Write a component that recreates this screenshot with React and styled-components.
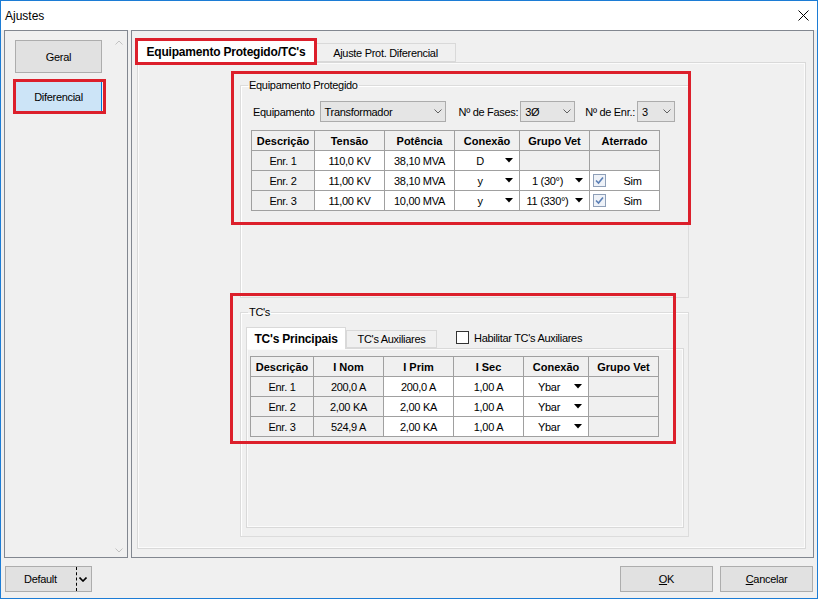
import React from 'react';
import styled, { createGlobalStyle } from 'styled-components';

const GlobalStyle = createGlobalStyle`
  html, body { margin: 0; padding: 0; background: #fff; }
  body {
    font-family: "Liberation Sans", Arial, sans-serif;
    font-size: 11px;
    color: #000;
  }
  * { box-sizing: border-box; }
`;

const RED = '#dc1f2b';

const Window = styled.div`
  width: 818px;
  height: 599px;
  border: 1px solid #1c7cd5;
  background: #f0f0f0;
  display: flex;
  flex-direction: column;
  overflow: hidden;
`;

const TitleBar = styled.div`
  height: 29px;
  flex: none;
  background: #fff;
  display: flex;
  align-items: center;
  justify-content: space-between;
  padding: 0 8px 0 4px;
  font-size: 12px;
`;

const Body = styled.div`
  height: 528px;
  flex: none;
  display: flex;
  gap: 3px;
  padding: 0 3px;
`;

const SidePanel = styled.div`
  width: 124px;
  border: 1px solid #828790;
  display: flex;
`;

const SideList = styled.div`
  flex: 1;
  display: flex;
  flex-direction: column;
  gap: 7px;
  padding: 9px 0 0 10px;
`;

const ScrollBar = styled.div`
  width: 17px;
  display: flex;
  flex-direction: column;
  justify-content: space-between;
  align-items: center;
  padding: 9px 0 4px;
`;

const Marked = styled.div`
  position: relative;
  align-self: flex-start;
`;

const Callout = styled.div`
  position: absolute;
  left: ${p => p.$l}px;
  top: ${p => p.$t}px;
  width: ${p => p.$w}px;
  height: ${p => p.$h}px;
  border: 3px solid ${RED};
  pointer-events: none;
  z-index: 5;
`;

const SideButton = styled.div`
  width: 87px;
  height: 33px;
  background: ${p => (p.$active ? '#cce4f7' : '#e1e1e1')};
  border: 1px solid ${p => (p.$active ? '#0078d7' : '#adadad')};
  display: flex;
  align-items: center;
  justify-content: center;
  letter-spacing: -0.3px;
`;

const MainPanel = styled.div`
  flex: 1;
  border: 1px solid #828790;
  display: flex;
  flex-direction: column;
  padding: 9px 7px 8px 5px;
`;

const TabStrip = styled.div`
  display: flex;
  align-items: flex-end;
  height: ${p => p.$h}px;
  flex: none;
`;

const Tab = styled.div`
  position: relative;
  width: ${p => p.$w}px;
  height: ${p => (p.$active ? p.$h + 1 : p.$h - 3)}px;
  margin-bottom: ${p => (p.$active ? -1 : 0)}px;
  z-index: ${p => (p.$active ? 2 : 1)};
  background: ${p => (p.$active ? '#fff' : '#f0f0f0')};
  border: 1px solid #d9d9d9;
  border-bottom: ${p => (p.$active ? 'none' : '1px solid #d9d9d9')};
  font-weight: ${p => (p.$active ? 'bold' : 'normal')};
  font-size: ${p => (p.$active ? 12 : 11)}px;
  letter-spacing: ${p => (p.$active ? -0.2 : -0.3)}px;
  display: flex;
  align-items: center;
  justify-content: center;
  white-space: nowrap;
`;

const TabPage = styled.div`
  flex: ${p => (p.$h ? 'none' : 1)};
  height: ${p => (p.$h ? `${p.$h}px` : 'auto')};
  border: 1px solid #d9d9d9;
  box-shadow: inset 0 0 0 1px #fbfbfb;
  padding: ${p => p.$pad};
`;

const Group = styled.fieldset`
  position: relative;
  margin: ${p => p.$mt || 0}px 0 0;
  padding: 0;
  width: 449px;
  height: ${p => p.$h}px;
  border: 1px solid #dcdcdc;
  box-shadow: inset 1px 1px 0 #fff;
  min-width: 0;
`;

const Legend = styled.legend`
  margin-left: 7px;
  padding: 0 1px;
  line-height: 13px;
  letter-spacing: -0.3px;
`;

const GroupContent = styled.div`
  padding: ${p => p.$pad};
`;

const FieldRow = styled.div`
  display: flex;
  align-items: center;
  height: 21px;
`;

const Label = styled.span`
  letter-spacing: -0.3px;
  margin-left: ${p => p.$ml || 0}px;
  margin-right: ${p => p.$mr || 0}px;
  white-space: nowrap;
`;

const Combo = styled.div`
  width: ${p => p.$w}px;
  height: 21px;
  background: #e5e5e5;
  border: 1px solid #acacac;
  display: flex;
  align-items: center;
  justify-content: space-between;
  padding: 0 3px 0 4px;
  letter-spacing: -0.3px;
`;

const Grid = styled.table`
  border-collapse: collapse;
  table-layout: fixed;
  margin: ${p => p.$m};
  font-size: 11px;
`;

const Th = styled.th`
  border: 1px solid #a0a0a0;
  background: #f0f0f0;
  height: 20px;
  padding: 0;
  font-weight: bold;
  text-align: center;
  white-space: nowrap;
`;

const Td = styled.td`
  border: 1px solid #a0a0a0;
  background: ${p => (p.$white ? '#fff' : '#f0f0f0')};
  height: 20px;
  padding: 0;
  text-align: center;
  letter-spacing: -0.3px;
  white-space: nowrap;
`;

const DropBox = styled.div`
  display: flex;
  align-items: center;
  height: 19px;
  padding-right: 6px;
  span { flex: 1; text-align: center; }
`;

const CheckCell = styled.div`
  display: flex;
  align-items: center;
  height: 19px;
  padding-left: 3px;
  span { flex: 1; text-align: center; }
`;

const GridCheck = styled.div`
  width: 13px;
  height: 13px;
  border: 1px solid #8e9fb8;
  background: #eef2f8;
  display: flex;
  align-items: center;
  justify-content: center;
`;

const CheckRow = styled.div`
  display: flex;
  align-items: center;
  gap: 5px;
  margin-left: 19px;
  align-self: center;
  letter-spacing: -0.3px;
`;

const CheckBox = styled.div`
  width: 13px;
  height: 13px;
  border: 1px solid #333;
  background: #fff;
`;

const Footer = styled.div`
  flex: 1;
  display: flex;
  justify-content: space-between;
  align-items: flex-start;
  padding: 8px 4px 0 4px;
`;

const Button = styled.div`
  width: ${p => p.$w}px;
  height: 26px;
  background: #e1e1e1;
  border: 1px solid #adadad;
  display: flex;
  align-items: center;
  justify-content: center;
  letter-spacing: -0.3px;
  u { text-decoration: underline; }
`;

const SplitButton = styled(Button)`
  justify-content: flex-start;
  padding-left: 18px;
`;

const SplitDivider = styled.div`
  margin-left: auto;
  width: 1px;
  height: 24px;
  border-left: 1px dashed #000;
  margin-right: 2px;
`;

const SplitGap = styled.span`
  width: 4px;
`;

const Buttons = styled.div`
  display: flex;
  gap: 7px;
`;

const Tri = () => (
  <svg width="8" height="5" viewBox="0 0 8 5">
    <polygon points="0,0 8,0 4,4.5" fill="#000" />
  </svg>
);

const Chevron = ({ color = '#606060', up = false, w = 8, sw = 1 }) => (
  <svg width={w} height="5" viewBox="0 0 8 5">
    <polyline
      points={up ? '0.5,4.5 4,1 7.5,4.5' : '0.5,0.5 4,4 7.5,0.5'}
      fill="none"
      stroke={color}
      strokeWidth={sw}
    />
  </svg>
);

const Tick = () => (
  <svg width="9" height="9" viewBox="0 0 9 9">
    <polyline points="1,4.5 3.5,7 8,1.5" fill="none" stroke="#5b7fb5" strokeWidth="1.6" />
  </svg>
);

const Drop = ({ children }) => (
  <DropBox>
    <span>{children}</span>
    <Tri />
  </DropBox>
);

const equipRows = [
  { d: 'Enr. 1', v: '110,0 KV', p: '38,10 MVA', c: 'D', g: null },
  { d: 'Enr. 2', v: '11,00 KV', p: '38,10 MVA', c: 'y', g: '1 (30°)' },
  { d: 'Enr. 3', v: '11,00 KV', p: '10,00 MVA', c: 'y', g: '11 (330°)' },
];

const tcRows = [
  { d: 'Enr. 1', n: '200,0 A', p: '200,0 A', s: '1,00 A' },
  { d: 'Enr. 2', n: '2,00 KA', p: '2,00 KA', s: '1,00 A' },
  { d: 'Enr. 3', n: '524,9 A', p: '2,00 KA', s: '1,00 A' },
];

export default function App() {
  return (
    <>
      <GlobalStyle />
      <Window>
        <TitleBar>
          <span>Ajustes</span>
          <svg width="11" height="11" viewBox="0 0 11 11">
            <path d="M0.5 0.5 L10.5 10.5 M10.5 0.5 L0.5 10.5" stroke="#000" strokeWidth="1" />
          </svg>
        </TitleBar>

        <Body>
          <SidePanel>
            <SideList>
              <SideButton>Geral</SideButton>
              <Marked>
                <SideButton $active>Diferencial</SideButton>
                <Callout $l={-2} $t={-1} $w={93} $h={35} />
              </Marked>
            </SideList>
            <ScrollBar>
              <Chevron up color="#c2c2c2" />
              <Chevron color="#c2c2c2" />
            </ScrollBar>
          </SidePanel>

          <MainPanel>
            <TabStrip $h={22}>
              <Tab $active $w={178} $h={22}>
                Equipamento Protegido/TC's
                <Callout $l={-3} $t={-3} $w={182} $h={27} />
              </Tab>
              <Tab $w={141} $h={22}>Ajuste Prot. Diferencial</Tab>
            </TabStrip>

            <TabPage $pad="16px 0 0 102px">
              <Group $h={219}>
                <Legend>Equipamento Protegido</Legend>
                <Callout $l={-10} $t={-21} $w={460} $h={154} />
                <GroupContent $pad="9px 0 0 12px">
                  <FieldRow>
                    <Label $mr={5}>Equipamento</Label>
                    <Combo $w={126}>
                      Transformador
                      <Chevron />
                    </Combo>
                    <Label $ml={13} $mr={2}>Nº de Fases:</Label>
                    <Combo $w={55}>
                      3Ø
                      <Chevron />
                    </Combo>
                    <Label $ml={10} $mr={2}>Nº de Enr.:</Label>
                    <Combo $w={38}>
                      3
                      <Chevron />
                    </Combo>
                  </FieldRow>

                  <Grid $m="8px 0 0 -2px">
                    <colgroup>
                      <col width="63" />
                      <col width="70" />
                      <col width="70" />
                      <col width="65" />
                      <col width="70" />
                      <col width="70" />
                    </colgroup>
                    <thead>
                      <tr>
                        <Th>Descrição</Th>
                        <Th>Tensão</Th>
                        <Th>Potência</Th>
                        <Th>Conexão</Th>
                        <Th>Grupo Vet</Th>
                        <Th>Aterrado</Th>
                      </tr>
                    </thead>
                    <tbody>
                      {equipRows.map(r => (
                        <tr key={r.d}>
                          <Td>{r.d}</Td>
                          <Td $white>{r.v}</Td>
                          <Td $white>{r.p}</Td>
                          <Td $white>
                            <Drop>{r.c}</Drop>
                          </Td>
                          {r.g ? (
                            <Td $white>
                              <Drop>{r.g}</Drop>
                            </Td>
                          ) : (
                            <Td />
                          )}
                          {r.g ? (
                            <Td $white>
                              <CheckCell>
                                <GridCheck>
                                  <Tick />
                                </GridCheck>
                                <span>Sim</span>
                              </CheckCell>
                            </Td>
                          ) : (
                            <Td />
                          )}
                        </tr>
                      ))}
                    </tbody>
                  </Grid>
                </GroupContent>
              </Group>

              <Group $h={231} $mt={8}>
                <Legend>TC's</Legend>
                <Callout $l={-11} $t={-26} $w={446} $h={151} />
                <GroupContent $pad="8px 4px 0 5px">
                  <TabStrip $h={21}>
                    <Tab $active $w={100} $h={21}>TC's Principais</Tab>
                    <Tab $w={91} $h={21}>TC's Auxiliares</Tab>
                    <CheckRow>
                      <CheckBox />
                      <span>Habilitar TC's Auxiliares</span>
                    </CheckRow>
                  </TabStrip>
                  <TabPage $pad="7px 0 0 3px" $h={180}>
                    <Grid $m="0">
                      <colgroup>
                        <col width="63" />
                        <col width="70" />
                        <col width="70" />
                        <col width="70" />
                        <col width="65" />
                        <col width="70" />
                      </colgroup>
                      <thead>
                        <tr>
                          <Th>Descrição</Th>
                          <Th>I Nom</Th>
                          <Th>I Prim</Th>
                          <Th>I Sec</Th>
                          <Th>Conexão</Th>
                          <Th>Grupo Vet</Th>
                        </tr>
                      </thead>
                      <tbody>
                        {tcRows.map(r => (
                          <tr key={r.d}>
                            <Td>{r.d}</Td>
                            <Td>{r.n}</Td>
                            <Td $white>{r.p}</Td>
                            <Td $white>{r.s}</Td>
                            <Td $white>
                              <Drop>Ybar</Drop>
                            </Td>
                            <Td />
                          </tr>
                        ))}
                      </tbody>
                    </Grid>
                  </TabPage>
                </GroupContent>
              </Group>
            </TabPage>
          </MainPanel>
        </Body>

        <Footer>
          <SplitButton $w={87}>
            Default
            <SplitDivider />
            <Chevron color="#000" sw={1.6} />
            <SplitGap />
          </SplitButton>
          <Buttons>
            <Button $w={93}>
              <u>O</u>K
            </Button>
            <Button $w={93}>
              <u>C</u>ancelar
            </Button>
          </Buttons>
        </Footer>
      </Window>
    </>
  );
}
